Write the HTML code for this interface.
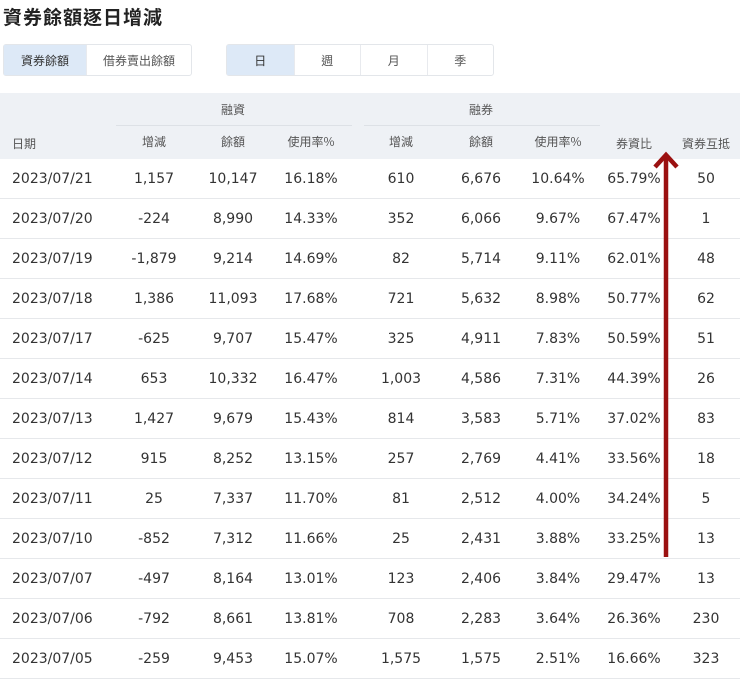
<!DOCTYPE html><html><head><meta charset="utf-8"><style>
*{margin:0;padding:0;box-sizing:border-box}
body{width:740px;height:673px;overflow:hidden;background:#fff;font-family:"DejaVu Sans","Liberation Sans","Noto Sans CJK TC",sans-serif;color:#333;position:relative}
.t{position:absolute;left:3px;top:3px;font:bold 19px "Noto Sans CJK TC",sans-serif;color:#222;letter-spacing:1px}
.g{position:absolute;top:44px;height:32px;border:1px solid #e3e6ea;border-radius:3px;display:flex;font:12px "Noto Sans CJK TC",sans-serif;color:#555}
.g div{display:flex;align-items:center;justify-content:center;border-left:1px solid #e8eaee}
.g div:first-child{border-left:none;background:#dde9f7;color:#333}
.hd{position:absolute;top:93px;left:0;width:740px;height:66px;background:#eef1f5}
.h{position:absolute;font:12px "Noto Sans CJK TC",sans-serif;color:#555;transform:translateX(-50%);white-space:nowrap}
.ln{position:absolute;top:125px;height:1px;background:#dde1e6}
.r{position:absolute;left:0;width:740px;height:40px;border-bottom:1px solid #e6e8eb;font-size:14px;color:#333}
.r span{position:absolute;top:12px;transform:translateX(-50%);white-space:nowrap}
.r span:first-child{transform:none;left:12px}
.r span:nth-child(2){left:154px}.r span:nth-child(3){left:233px}.r span:nth-child(4){left:311px}
.r span:nth-child(5){left:401px}.r span:nth-child(6){left:481px}.r span:nth-child(7){left:558px}
.r span:nth-child(8){left:634px}.r span:nth-child(9){left:706px}
</style></head><body>
<div class="t">資券餘額逐日增減</div>
<div class="g" style="left:3px;width:189px"><div style="width:82px">資券餘額</div><div style="width:105px">借券賣出餘額</div></div>
<div class="g" style="left:226px;width:268px"><div style="width:67px">日</div><div style="width:67px">週</div><div style="width:67px">月</div><div style="width:67px">季</div></div>
<div class="hd"></div>
<div class="h" style="left:233px;top:101px">融資</div>
<div class="h" style="left:481px;top:101px">融券</div>
<div class="ln" style="left:116px;width:236px"></div>
<div class="ln" style="left:364px;width:236px"></div>
<div class="h" style="left:12px;top:135px;transform:none">日期</div>
<div class="h" style="left:154px;top:133px">增減</div>
<div class="h" style="left:233px;top:133px">餘額</div>
<div class="h" style="left:311px;top:133px">使用率%</div>
<div class="h" style="left:401px;top:133px">增減</div>
<div class="h" style="left:481px;top:133px">餘額</div>
<div class="h" style="left:558px;top:133px">使用率%</div>
<div class="h" style="left:634px;top:135px">券資比</div>
<div class="h" style="left:706px;top:135px">資券互抵</div>
<div class="r" style="top:159px"><span>2023/07/21</span><span>1,157</span><span>10,147</span><span>16.18%</span><span>610</span><span>6,676</span><span>10.64%</span><span>65.79%</span><span>50</span></div>
<div class="r" style="top:199px"><span>2023/07/20</span><span>-224</span><span>8,990</span><span>14.33%</span><span>352</span><span>6,066</span><span>9.67%</span><span>67.47%</span><span>1</span></div>
<div class="r" style="top:239px"><span>2023/07/19</span><span>-1,879</span><span>9,214</span><span>14.69%</span><span>82</span><span>5,714</span><span>9.11%</span><span>62.01%</span><span>48</span></div>
<div class="r" style="top:279px"><span>2023/07/18</span><span>1,386</span><span>11,093</span><span>17.68%</span><span>721</span><span>5,632</span><span>8.98%</span><span>50.77%</span><span>62</span></div>
<div class="r" style="top:319px"><span>2023/07/17</span><span>-625</span><span>9,707</span><span>15.47%</span><span>325</span><span>4,911</span><span>7.83%</span><span>50.59%</span><span>51</span></div>
<div class="r" style="top:359px"><span>2023/07/14</span><span>653</span><span>10,332</span><span>16.47%</span><span>1,003</span><span>4,586</span><span>7.31%</span><span>44.39%</span><span>26</span></div>
<div class="r" style="top:399px"><span>2023/07/13</span><span>1,427</span><span>9,679</span><span>15.43%</span><span>814</span><span>3,583</span><span>5.71%</span><span>37.02%</span><span>83</span></div>
<div class="r" style="top:439px"><span>2023/07/12</span><span>915</span><span>8,252</span><span>13.15%</span><span>257</span><span>2,769</span><span>4.41%</span><span>33.56%</span><span>18</span></div>
<div class="r" style="top:479px"><span>2023/07/11</span><span>25</span><span>7,337</span><span>11.70%</span><span>81</span><span>2,512</span><span>4.00%</span><span>34.24%</span><span>5</span></div>
<div class="r" style="top:519px"><span>2023/07/10</span><span>-852</span><span>7,312</span><span>11.66%</span><span>25</span><span>2,431</span><span>3.88%</span><span>33.25%</span><span>13</span></div>
<div class="r" style="top:559px"><span>2023/07/07</span><span>-497</span><span>8,164</span><span>13.01%</span><span>123</span><span>2,406</span><span>3.84%</span><span>29.47%</span><span>13</span></div>
<div class="r" style="top:599px"><span>2023/07/06</span><span>-792</span><span>8,661</span><span>13.81%</span><span>708</span><span>2,283</span><span>3.64%</span><span>26.36%</span><span>230</span></div>
<div class="r" style="top:639px"><span>2023/07/05</span><span>-259</span><span>9,453</span><span>15.07%</span><span>1,575</span><span>1,575</span><span>2.51%</span><span>16.66%</span><span>323</span></div>
<svg style="position:absolute;left:650px;top:148px" width="34" height="412"><path d="M16 8 V409" stroke="#9b1111" stroke-width="4.5"/><path d="M5 19 L16 7 L27 19" fill="none" stroke="#9b1111" stroke-width="4.5" stroke-linejoin="miter"/></svg>
</body></html>
